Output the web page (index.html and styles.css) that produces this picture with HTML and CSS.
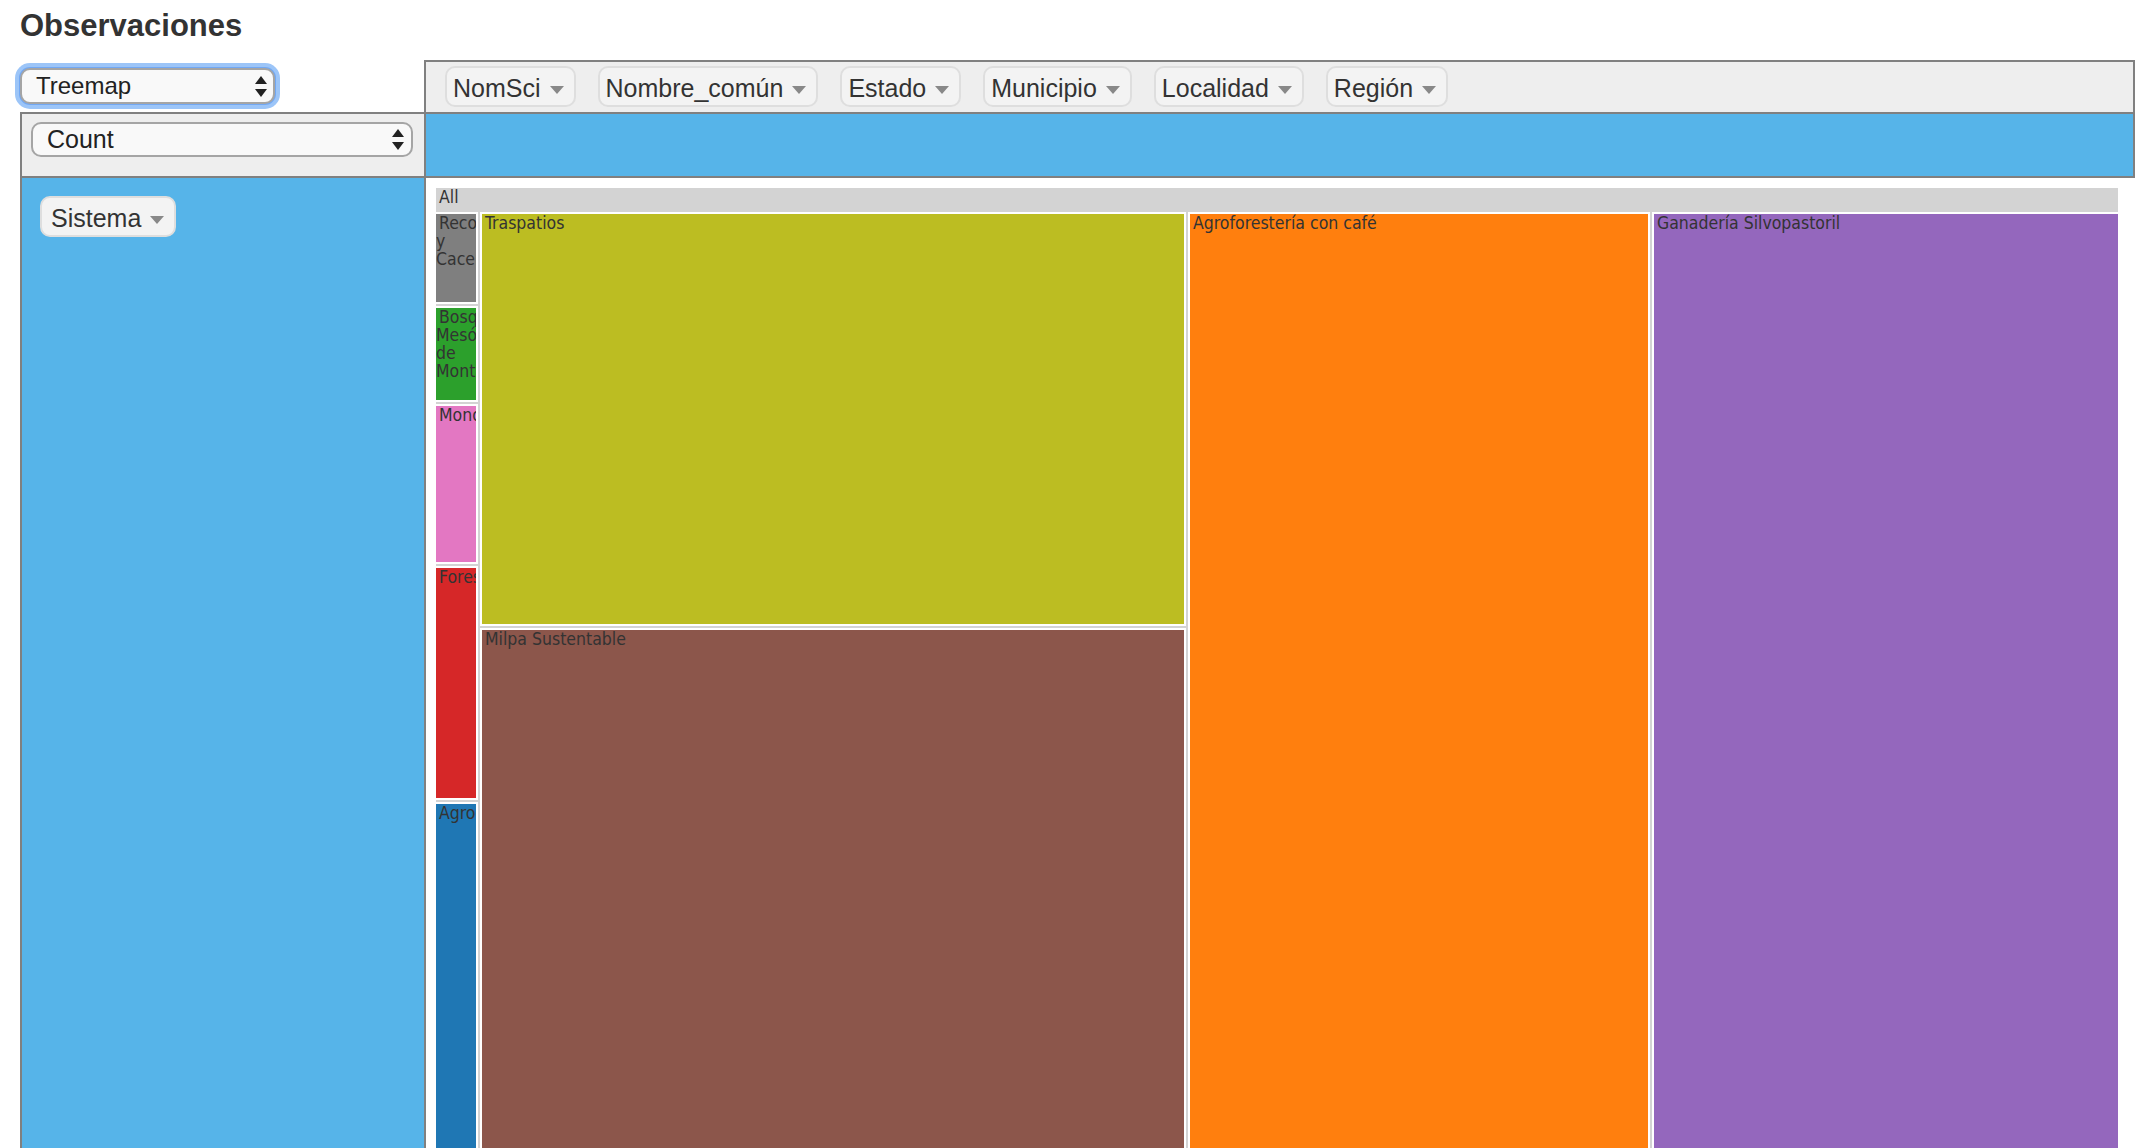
FILE: index.html
```html
<!DOCTYPE html>
<html lang="es">
<head>
<meta charset="utf-8">
<title>Observaciones</title>
<link rel="stylesheet" href="styles.css">
</head>
<body>
<main class="page">
  <h1 class="title">Observaciones</h1>
  <table class="pvt-ui">
    <colgroup><col class="col-left"><col class="col-right"></colgroup>
    <tbody>
      <tr>
        <td class="cell-renderer">
          <div class="select select--focus">
            <span>Treemap</span>
            <svg class="select-arrows" viewBox="0 0 12 21" width="12" height="21" aria-hidden="true"><path d="M6 0 L12 8 L0 8 Z"/><path d="M0 13 L12 13 L6 21 Z"/></svg>
          </div>
        </td>
        <td class="cell-unused">
          <ul class="attr-list">
            <li class="pill">NomSci<span class="tri"></span></li>
            <li class="pill">Nombre_común<span class="tri"></span></li>
            <li class="pill">Estado<span class="tri"></span></li>
            <li class="pill">Municipio<span class="tri"></span></li>
            <li class="pill">Localidad<span class="tri"></span></li>
            <li class="pill">Región<span class="tri"></span></li>
          </ul>
        </td>
      </tr>
      <tr>
        <td class="cell-vals">
          <div class="select select--wide">
            <span>Count</span>
            <svg class="select-arrows" viewBox="0 0 12 21" width="12" height="21" aria-hidden="true"><path d="M6 0 L12 8 L0 8 Z"/><path d="M0 13 L12 13 L6 21 Z"/></svg>
          </div>
        </td>
        <td class="cell-cols"></td>
      </tr>
      <tr>
        <td class="cell-rows">
          <ul class="attr-list">
            <li class="pill pill--rows">Sistema<span class="tri"></span></li>
          </ul>
        </td>
        <td class="cell-area">
          <div class="treemap">
            <div class="treemap-label">All</div>
            <div class="treemap-children">
              <div class="tm-col tm-col--1">
                <div class="node node--gray h-92">Recolección y Cacería</div>
                <div class="node node--green h-96">Bosque Mesófilo de Montaña</div>
                <div class="node node--pink h-160">Monocultivo</div>
                <div class="node node--red h-234">Forestería</div>
                <div class="node node--blue node--fill">Agroecología</div>
              </div>
              <div class="tm-col tm-col--2">
                <div class="node node--olive h-414">Traspatios</div>
                <div class="node node--brown node--fill">Milpa Sustentable</div>
              </div>
              <div class="tm-col tm-col--3">
                <div class="node node--orange node--fill">Agroforestería con café</div>
              </div>
              <div class="tm-col tm-col--4">
                <div class="node node--purple node--fill">Ganadería Silvopastoril</div>
              </div>
            </div>
          </div>
        </td>
      </tr>
    </tbody>
  </table>
</main>
</body>
</html>
```

FILE: styles.css
```css
* { box-sizing: border-box; }

html, body {
  margin: 0;
  background: #fff;
}

body {
  font-family: "Liberation Sans", Arial, Helvetica, sans-serif;
  color: #333;
}

.page {
  padding: 8px 0 0 20px;
}

.title {
  margin: 0 0 16px;
  font-size: 31px;
  line-height: 36px;
  font-weight: bold;
  color: #333;
}

.pvt-ui {
  border-collapse: separate;
  border-spacing: 0;
  table-layout: fixed;
  width: 2115px;
}

.col-left { width: 404px; }
.col-right { width: 1711px; }

.pvt-ui td {
  padding: 0;
  vertical-align: top;
}

.pvt-ui .cell-renderer {
  padding-top: 8px;
}

.pvt-ui .cell-unused {
  background: #eee;
  border: 2px solid #808080;
  border-bottom: 0;
  padding: 4px 0 5px 19px;
}

.pvt-ui .cell-vals {
  background: #eee;
  border: 2px solid #808080;
  border-right: 0;
  padding: 8px 11px 19px 9px;
}

.pvt-ui .cell-cols {
  background: #56b4e9;
  border: 2px solid #808080;
}

.pvt-ui .cell-rows {
  background: #56b4e9;
  border-left: 2px solid #808080;
  border-bottom: 2px solid #808080;
  padding: 18px;
}

.pvt-ui .cell-area {
  border-left: 2px solid #808080;
  padding: 8px 0 0 8px;
}

/* selects */
.select {
  display: flex;
  align-items: center;
  justify-content: space-between;
  width: 255px;
  height: 36px;
  padding: 0 6px 0 14px;
  border: 2px solid #a5a5a5;
  border-radius: 10px;
  background: #f9f9f9;
  font-size: 24px;
  color: #222;
}

.select--focus {
  box-shadow: 0 0 0 1px #72a8f3, 0 0 0 5px #9cc5f8;
}

.select--wide {
  width: 382px;
  height: 35px;
  font-size: 25px;
  padding-right: 7px;
}

.select-arrows {
  display: block;
  width: 12px;
  height: 21px;
  fill: #222;
}

/* attribute pills */
.attr-list {
  display: flex;
  gap: 22px;
  margin: 0;
  padding: 0;
  list-style: none;
}

.pill {
  display: flex;
  align-items: center;
  height: 41px;
  padding: 3px 10px 0 6px;
  border: 2px solid #dedede;
  border-radius: 10px;
  background: #f3f3f3;
  font-size: 25px;
  color: #333;
  white-space: nowrap;
}

.pill--rows {
  padding-left: 9px;
}

.tri {
  width: 0;
  height: 0;
  margin: 4px 0 0 9px;
  border-left: 7px solid transparent;
  border-right: 7px solid transparent;
  border-top: 8px solid #888;
}

/* treemap */
.treemap {
  display: flex;
  flex-direction: column;
  width: 1686px;
  height: 975px;
  border: 2px solid #fff;
  background: #d3d3d3;
  font-family: "DejaVu Sans Condensed", "DejaVu Sans", sans-serif;
  font-stretch: condensed;
  font-size: 17.5px;
  line-height: 18px;
  color: #333;
}

.treemap-label {
  flex: none;
  height: 24px;
  text-indent: 3px;
}

.treemap-children {
  flex: 1;
  display: flex;
  gap: 2px;
  margin: 0 -2px -2px;
}

.tm-col {
  flex: none;
  display: flex;
  flex-direction: column;
  gap: 2px;
}

.tm-col--1 { width: 44px; }
.tm-col--2 { width: 706px; }
.tm-col--3 { width: 462px; }
.tm-col--4 { width: 468px; }

.node {
  flex: none;
  border: 2px solid #fff;
  overflow: hidden;
  text-indent: 3px;
}

.node--fill { flex: 1; }

.h-92 { height: 92px; }
.h-96 { height: 96px; }
.h-160 { height: 160px; }
.h-234 { height: 234px; }
.h-414 { height: 414px; }

.node--gray { background: #7f7f7f; }
.node--green { background: #2ca02c; }
.node--pink { background: #e377c2; }
.node--red { background: #d62728; }
.node--blue { background: #1f77b4; }
.node--olive { background: #bcbd22; }
.node--brown { background: #8c564b; }
.node--orange { background: #ff7f0e; }
.node--purple { background: #9467bd; }
```
